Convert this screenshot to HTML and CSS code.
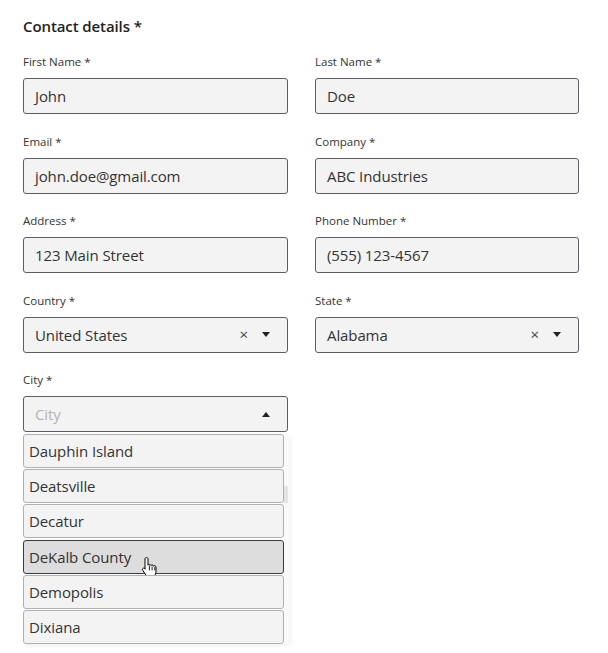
FILE: index.html
```html
<!DOCTYPE html>
<html>
<head>
<meta charset="utf-8">
<link rel="stylesheet" href="styles.css">
</head>
<body>
<div class="form">
  <h2 class="title">Contact details *</h2>
  <div class="grid">
    <div class="field">
      <label class="label">First Name *</label>
      <div class="input">John</div>
    </div>
    <div class="field">
      <label class="label">Last Name *</label>
      <div class="input">Doe</div>
    </div>
    <div class="field">
      <label class="label">Email *</label>
      <div class="input">john.doe@gmail.com</div>
    </div>
    <div class="field">
      <label class="label">Company *</label>
      <div class="input">ABC Industries</div>
    </div>
    <div class="field">
      <label class="label">Address *</label>
      <div class="input">123 Main Street</div>
    </div>
    <div class="field">
      <label class="label">Phone Number *</label>
      <div class="input">(555) 123-4567</div>
    </div>
    <div class="field">
      <label class="label">Country *</label>
      <div class="input select">
        <span class="value">United States</span>
        <span class="clear">&#215;</span>
        <span class="caret down"></span>
      </div>
    </div>
    <div class="field">
      <label class="label">State *</label>
      <div class="input select">
        <span class="value">Alabama</span>
        <span class="clear">&#215;</span>
        <span class="caret down"></span>
      </div>
    </div>
    <div class="field city">
      <label class="label">City *</label>
      <div class="input select open">
        <span class="value placeholder">City</span>
        <span class="caret up"></span>
      </div>
      <div class="menu">
        <ul class="options">
          <li class="option">Dauphin Island</li>
          <li class="option">Deatsville</li>
          <li class="option">Decatur</li>
          <li class="option hover">DeKalb County
            <svg class="cursor" width="17" height="22" viewBox="0 0 17 22">
              <path d="M5.5 1.5c.9 0 1.5.6 1.5 1.5v6.2c.3-.5.8-.8 1.4-.8.8 0 1.3.5 1.4 1.2.3-.4.8-.7 1.300-.7.8 0 1.4.6 1.4 1.3.3-.3.7-.5 1.1-.5.8 0 1.4.6 1.4 1.5v4.6c0 3-2 5.3-5 5.3H8.6c-1.6 0-2.8-.7-3.7-2L1.7 14.2c-.5-.7-.3-1.5.4-1.9.6-.4 1.4-.2 1.9.3L4 13.2V3c0-.9.6-1.5 1.5-1.5z" fill="#fff" stroke="#000" stroke-width="1" stroke-linejoin="round"/>
              <path d="M8.4 10v4M11.1 11v3M13.8 11.5v2.5" stroke="#000" stroke-width="0.9" fill="none" stroke-linecap="round"/>
            </svg>
          </li>
          <li class="option">Demopolis</li>
          <li class="option">Dixiana</li>
        </ul>
        <div class="scrollbar"><div class="thumb"></div></div>
      </div>
    </div>
  </div>
</div>
</body>
</html>
```

FILE: styles.css
```css
* { box-sizing: border-box; }
html, body { margin: 0; padding: 0; background: #ffffff; }
body {
  font-family: "Open Sans", "Noto Sans", sans-serif;
  color: #333333;
  width: 608px;
  height: 653px;
  overflow: hidden;
}
.form {
  padding: 16px 29px 0 23px;
}
.title {
  margin: 0 0 17px 0;
  font-size: 15px;
  line-height: 21px;
  font-weight: 600;
  color: #222222;
  letter-spacing: -0.1px;
}
.grid {
  display: grid;
  grid-template-columns: 265px 264px;
  column-gap: 27px;
  row-gap: 19.5px;
}
.field {
  display: flex;
  flex-direction: column;
}
.label {
  font-size: 11.5px;
  line-height: 16px;
  margin-bottom: 8px;
  color: #333333;
}
.input {
  height: 36px;
  background: #f3f3f3;
  border: 1px solid #5c5c66;
  border-radius: 3px;
  padding: 0 11px;
  font-size: 15px;
  line-height: 34px;
  color: #333333;
  display: flex;
  align-items: center;
  letter-spacing: -0.1px;
}
.select .value { flex: 1; }
.placeholder { color: #b4b4b4; }
.clear {
  font-size: 15px;
  color: #444;
  margin-right: 14px;
  line-height: 1;
}
.caret {
  width: 0;
  height: 0;
  border-left: 4.5px solid transparent;
  border-right: 4.5px solid transparent;
  margin-right: 6px;
}
.caret.down { border-top: 5px solid #222; }
.caret.up { border-bottom: 5px solid #222; }
.city { position: relative; }
.menu {
  position: absolute;
  left: 0;
  top: 62px;
  width: 266px;
  display: flex;
  box-shadow: 2px 2px 4px rgba(0,0,0,0.06);
}
.options {
  list-style: none;
  margin: 0;
  padding: 0;
  width: 261px;
  display: flex;
  flex-direction: column;
  gap: 1.2px;
}
.option {
  position: relative;
  height: 34px;
  background: #f3f3f3;
  border: 1px solid #b0b0b0;
  border-radius: 3px;
  padding: 0 5px;
  font-size: 15px;
  line-height: 32px;
  color: #333333;
  letter-spacing: -0.1px;
}
.option.hover {
  background: #dddddd;
  border: 1.5px solid #3a3a44;
}
.cursor {
  position: absolute;
  left: 117px;
  top: 15px;
}
.scrollbar {
  width: 5px;
  background: #fafafa;
  position: relative;
}
.thumb {
  position: absolute;
  left: 0;
  top: 52px;
  width: 4px;
  height: 17px;
  background: #e4e4e4;
}
```
